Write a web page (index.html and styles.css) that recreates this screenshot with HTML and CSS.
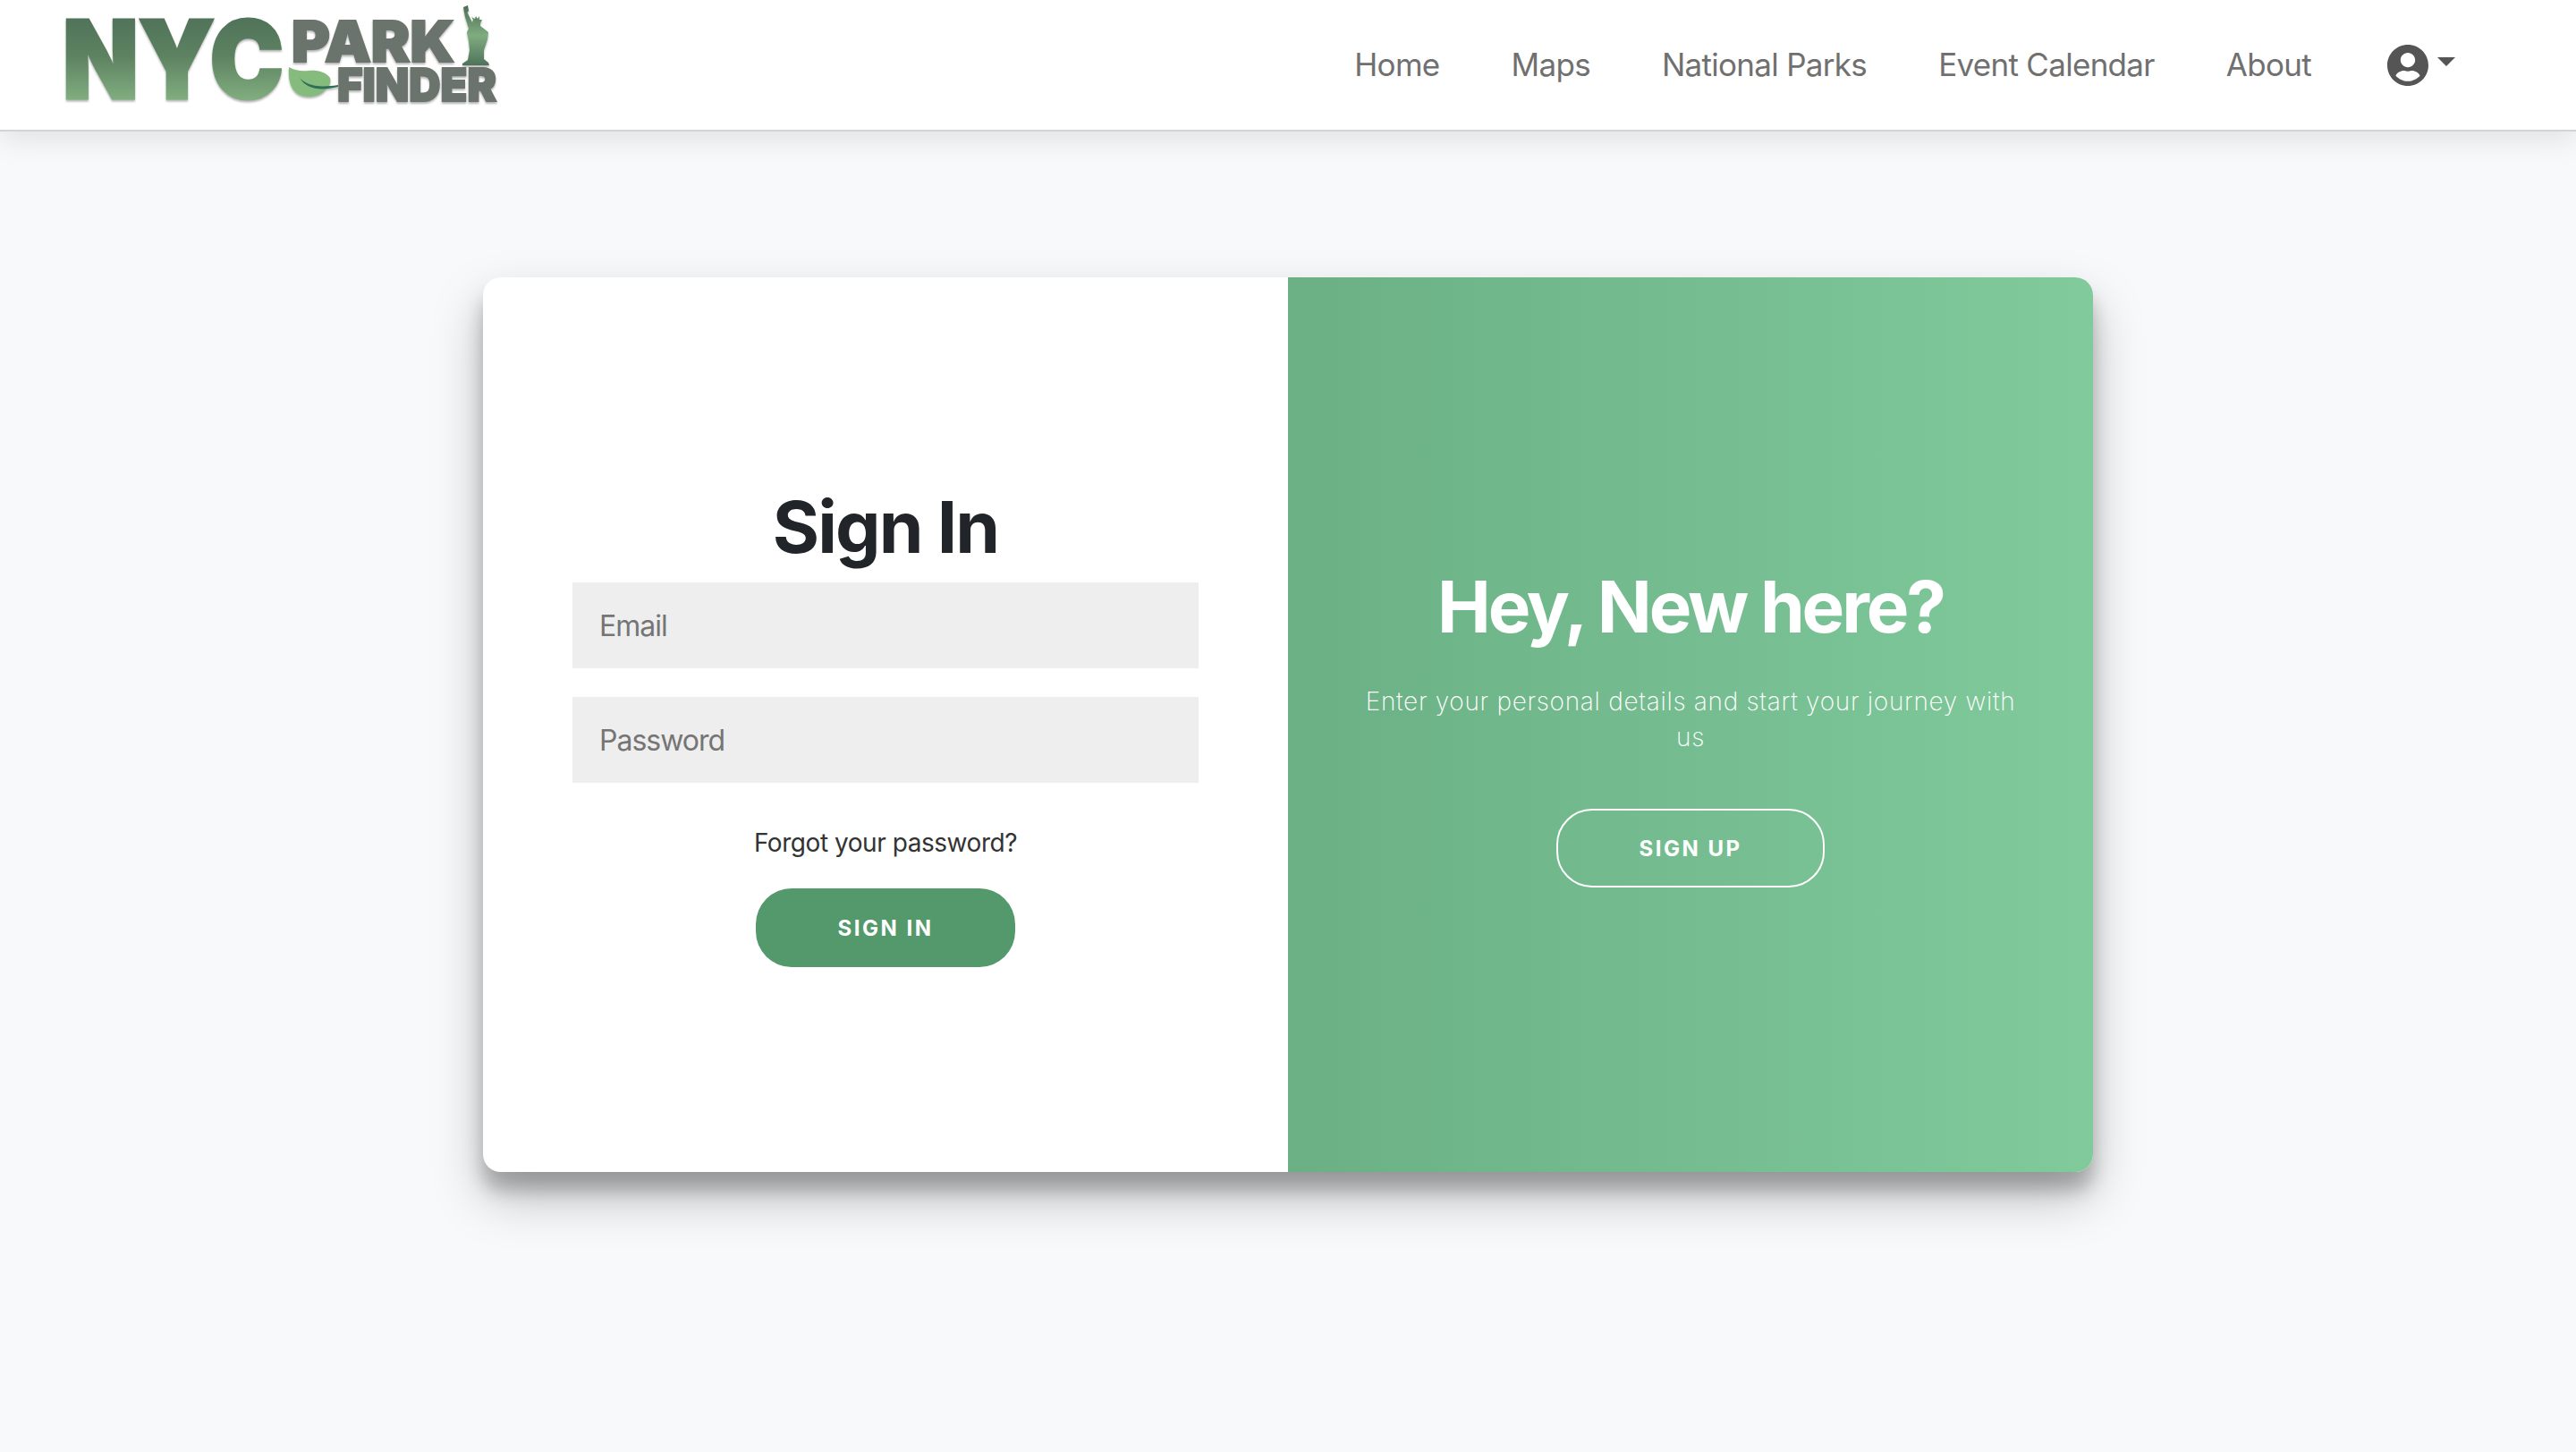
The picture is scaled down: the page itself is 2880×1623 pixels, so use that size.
FILE: index.html
```html
<!DOCTYPE html>
<html lang="en">
<head>
    <meta charset="UTF-8">
    <title>NYC Park Finder</title>
    <link rel="stylesheet" href="styles.css">
</head>
<body>
    <nav class="navbar">
        <a class="brand" href="#">
            <svg class="brand-logo" viewBox="70 0 490 145" role="img" aria-label="NYC Park Finder">
                <defs>
                    <linearGradient id="nyc-fill" gradientUnits="userSpaceOnUse" x1="0" y1="24" x2="0" y2="112">
                        <stop offset="0" stop-color="#51745a"/>
                        <stop offset="0.45" stop-color="#5d8261"/>
                        <stop offset="1" stop-color="#80ad7f"/>
                    </linearGradient>
                    <linearGradient id="statue-fill" gradientUnits="userSpaceOnUse" x1="0" y1="7" x2="0" y2="74">
                        <stop offset="0" stop-color="#4c6d55"/>
                        <stop offset="0.5" stop-color="#7fac7f"/>
                        <stop offset="1" stop-color="#4f7359"/>
                    </linearGradient>
                </defs>
                <g class="logo-shadow">
                    <text class="logo-nyc" x="70" y="111" textLength="247" lengthAdjust="spacingAndGlyphs">NYC</text>
                    <text class="logo-word logo-park" x="326" y="70" textLength="182" lengthAdjust="spacingAndGlyphs">PARK</text>
                    <text class="logo-word logo-finder" x="377" y="114" textLength="178" lengthAdjust="spacingAndGlyphs">FINDER</text>
                    <path class="logo-leaf" d="M323 76C330 80 338 81 345 80C354 79 364 81 369 88C370 92 369 95 367 98C362 104 358 107 353 108C346 110 338 109 333 106C325 101 322 90 323 76Z"/>
                    <path class="logo-vein" d="M335 88C342 95 352 100 378 96L378 98C358 103 343 101 335 88Z"/>
                    <path class="logo-statue" d="M518 9L523 7L524 13L522.500 15L528 26L529 23L527 20L531 22L532 19L534 22L536 19L536 23L539 23L537 27L537 30L541 33L546 37L545 45L541 57L541 67L546 71L547 74L517 74L517 72L523 68L525 57L524 47L522 37L524 33L520 20L519 15Z"/>
                </g>
            </svg>
        </a>
        <ul class="nav-links">
            <li><a href="#">Home</a></li>
            <li><a href="#">Maps</a></li>
            <li><a href="#">National Parks</a></li>
            <li><a href="#">Event Calendar</a></li>
            <li><a href="#">About</a></li>
            <li>
                <a class="user-menu" href="#" aria-label="Account">
                    <svg class="user-icon" viewBox="0 0 496 512"><path d="M248 8C111 8 0 119 0 256s111 248 248 248 248-111 248-248S385 8 248 8zm0 96c48.6 0 88 39.4 88 88s-39.4 88-88 88-88-39.4-88-88 39.4-88 88-88zm0 344c-58.7 0-111.3-26.6-146.5-68.2 18.8-35.4 55.6-59.8 98.5-59.8 2.4 0 4.8.4 7.1 1.1 13 4.2 26.6 6.9 40.9 6.9 14.3 0 28-2.7 40.9-6.9 2.3-.7 4.7-1.1 7.1-1.1 42.9 0 79.7 24.4 98.5 59.8C359.3 421.4 306.7 448 248 448z"/></svg>
                    <span class="caret"></span>
                </a>
            </li>
        </ul>
    </nav>

    <main class="page">
        <div class="auth-card">
            <form class="signin-form">
                <h1>Sign In</h1>
                <input type="email" placeholder="Email">
                <input type="password" placeholder="Password">
                <a class="forgot-link" href="#">Forgot your password?</a>
                <button class="btn btn-solid" type="button">Sign In</button>
            </form>
            <section class="signup-panel">
                <h1>Hey, New here?</h1>
                <p>Enter your personal details and start your journey with us</p>
                <button class="btn btn-ghost" type="button">Sign Up</button>
            </section>
        </div>
    </main>
</body>
</html>
```

FILE: styles.css
```css
/* General */
* {
    box-sizing: border-box;
}

body {
    margin: 0;
    min-height: 100vh;
    background-color: #f8f9fa;
    font-family: Inter, "Liberation Sans", sans-serif;
}

a {
    text-decoration: none;
}

/* Top navigation */
.navbar {
    display: flex;
    justify-content: space-between;
    align-items: center;
    height: 147px;
    padding: 0 135px 2px 70px;
    background-color: #fff;
    border-bottom: 2px solid #d4d4d4;
    box-shadow: 0 8px 32px rgba(0, 0, 0, 0.1);
}

.brand {
    display: flex;
}

.brand-logo {
    width: 490px;
    height: 145px;
    overflow: visible;
}

.logo-shadow {
    filter: drop-shadow(0 2px 1px rgba(0, 0, 0, 0.3));
}

.logo-nyc,
.logo-word {
    font-family: Inter, "Liberation Sans", sans-serif;
    font-weight: 900;
}

.logo-nyc {
    font-size: 121px;
    fill: url(#nyc-fill);
    stroke: url(#nyc-fill);
    stroke-width: 3px;
}

.logo-word {
    fill: #6b746c;
    stroke: #6b746c;
    stroke-width: 2px;
}

.logo-park {
    font-size: 63px;
}

.logo-finder {
    font-size: 51px;
}

.logo-leaf {
    fill: #86bb7e;
}

.logo-vein {
    fill: #2f6f55;
}

.logo-statue {
    fill: url(#statue-fill);
}

.nav-links {
    display: flex;
    align-items: center;
    gap: 80px;
    margin: 0;
    padding: 0;
    list-style: none;
    font-size: 35px;
    letter-spacing: -0.7px;
}

.nav-links a {
    color: #707070;
}

.user-menu {
    display: flex;
    align-items: flex-start;
    gap: 10px;
    margin-left: 5px;
    padding-top: 3px;
}

.user-icon {
    width: 46px;
    height: 48px;
    fill: #555;
}

.caret {
    margin-top: 15px;
    border-top: 10px solid #555;
    border-left: 10px solid transparent;
    border-right: 10px solid transparent;
}

/* Card */
.page {
    display: flex;
    justify-content: center;
    padding-top: 163px;
}

.auth-card {
    display: flex;
    width: 1800px;
    height: 1000px;
    background-color: #fff;
    border-radius: 20px;
    box-shadow: 0 28px 56px rgba(0, 0, 0, 0.25), 0 20px 20px rgba(0, 0, 0, 0.22);
    overflow: hidden;
}

.signin-form,
.signup-panel {
    display: flex;
    flex-direction: column;
    align-items: center;
    justify-content: center;
    width: 900px;
    text-align: center;
}

h1 {
    margin: 0;
    font-size: 80px;
    font-weight: 700;
    line-height: 96px;
}

.signin-form {
    padding: 0 100px;
}

.signin-form h1 {
    margin: 2px 0 -2px;
    color: #212529;
    letter-spacing: -1.9px;
}

.signin-form input {
    width: 100%;
    height: 96px;
    margin: 16px 0;
    padding: 0 30px;
    background-color: #eee;
    border: none;
    font-family: inherit;
    font-size: 32px;
    letter-spacing: -1px;
}

.forgot-link {
    margin: 31px 0;
    color: #333;
    font-size: 28px;
    line-height: 40px;
    letter-spacing: -0.45px;
}

.btn {
    padding: 25px 90px 23px;
    border-radius: 40px;
    font-family: inherit;
    font-size: 24px;
    font-weight: 700;
    line-height: 36px;
    letter-spacing: 2.5px;
    text-transform: uppercase;
    color: #fff;
    border: 2px solid transparent;
}

.btn-solid {
    background-color: #53996b;
}

.btn-ghost {
    background-color: transparent;
    border-color: #fff;
}

/* Right panel */
.signup-panel {
    padding: 0 80px;
    color: #fff;
    background: linear-gradient(to right, #6ab084, #80ca9c);
}

.signup-panel h1 {
    margin-top: 2px;
    letter-spacing: -3.1px;
}

.signup-panel p {
    margin: 38px 0 60px;
    font-size: 28px;
    font-weight: 200;
    line-height: 40px;
    letter-spacing: 0.7px;
}
```
